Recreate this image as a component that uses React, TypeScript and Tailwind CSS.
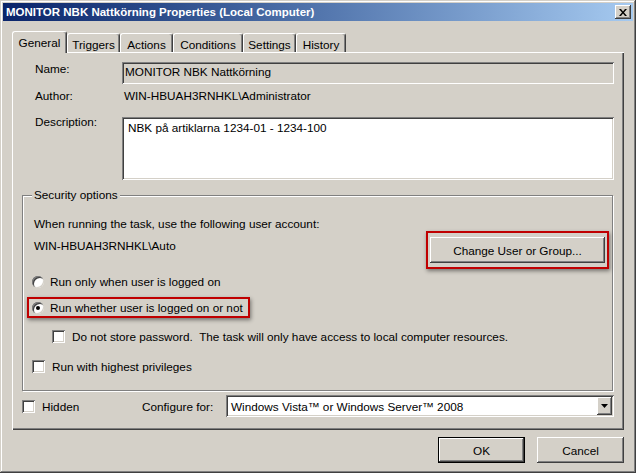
import React from "react";

const raised =
  "shadow-[inset_-1px_-1px_#404040,inset_1px_1px_#ffffff,inset_-2px_-2px_#808080,inset_2px_2px_#d4d0c8]";
const sunken =
  "shadow-[inset_1px_1px_#808080,inset_-1px_-1px_#ffffff,inset_2px_2px_#404040,inset_-2px_-2px_#d4d0c8]";

function Radio({ checked }: { checked?: boolean }) {
  return (
    <span className="w-[12px] h-[12px] rounded-full bg-white shadow-[inset_1px_1px_#808080,inset_-1px_-1px_#d4d0c8,inset_2px_2px_#404040] flex items-center justify-center shrink-0">
      {checked && <span className="w-[4px] h-[4px] rounded-full bg-black" />}
    </span>
  );
}

function Check() {
  return <span className={`w-[13px] h-[13px] bg-white shrink-0 ${sunken}`} />;
}

function Tab({ label, w, active }: { label: string; w: string; active?: boolean }) {
  return (
    <div
      className={`${w} ${
        active ? "h-[22px] -mb-[1px] z-10 pt-0" : "h-[19px] pt-[2px]"
      } relative bg-[#d4d0c8] flex items-center justify-center rounded-t-[3px] border-t border-l border-white border-r border-r-[#404040] shadow-[inset_-1px_0_#808080]`}
    >
      {label}
    </div>
  );
}

export default function App() {
  return (
    <div className="w-[636px] h-[473px] bg-[#d4d0c8] p-[3px] flex flex-col text-[11.75px] leading-[15px] text-black font-['Liberation_Sans',Arial,sans-serif] shadow-[inset_-1px_-1px_#404040,inset_1px_1px_#d4d0c8,inset_-2px_-2px_#808080,inset_2px_2px_#ffffff]">
      {/* title bar */}
      <div className="h-[18px] shrink-0 flex items-center justify-between pl-[3px] pr-[2px] bg-gradient-to-r from-[#0a246a] to-[#a6caf0]">
        <span className="text-white font-bold text-[11.5px]">
          MONITOR NBK Nattkörning Properties (Local Computer)
        </span>
        <div className={`w-[16px] h-[14px] bg-[#d4d0c8] flex items-center justify-center ${raised}`}>
          <svg width="8" height="7" viewBox="0 0 8 7">
            <path d="M0 0h2l2 2.5L6 0h2L5 3.5 8 7H6L4 4.5 2 7H0l3-3.5z" fill="#000" />
          </svg>
        </div>
      </div>

      <div className="flex-1 flex flex-col px-[9px] pt-[10px]">
        {/* tabs */}
        <div className="h-[21px] flex items-end relative z-10">
          <Tab label="General" w="w-[55px]" active />
          <Tab label="Triggers" w="w-[53px]" />
          <Tab label="Actions" w="w-[53px]" />
          <Tab label="Conditions" w="w-[70px]" />
          <Tab label="Settings" w="w-[53px]" />
          <Tab label="History" w="w-[50px]" />
        </div>

        {/* panel */}
        <div className="h-[378px] flex flex-col px-[10px] pt-[10px] shadow-[inset_1px_1px_#ffffff,inset_-1px_-1px_#404040,inset_-2px_-2px_#808080]">
          <div className="flex items-start">
            <div className="w-[100px] pl-[13px] -mt-[1px]">Name:</div>
            <div className={`w-[492px] h-[22px] pl-[3px] pt-[2px] bg-[#d4d0c8] ${sunken}`}>
              MONITOR NBK Nattkörning
            </div>
          </div>
          <div className="flex mt-[4px]">
            <div className="w-[100px] pl-[13px]">Author:</div>
            <div className="pl-[2px]">WIN-HBUAH3RNHKL\Administrator</div>
          </div>
          <div className="flex items-start mt-[14px]">
            <div className="w-[100px] pl-[13px] -mt-[3px]">Description:</div>
            <div className={`w-[492px] h-[63px] pl-[6px] pt-[3px] bg-white ${sunken}`}>
              NBK på artiklarna 1234-01 - 1234-100
            </div>
          </div>

          {/* security group */}
          <div className="relative mt-[15px] mr-[1px] h-[196px] border border-[#808080] shadow-[inset_1px_1px_#ffffff,1px_1px_#ffffff] pl-[11px] pr-[3px] pt-[20px] flex flex-col">
            <span className="absolute -top-[9px] left-[9px] px-[2px] bg-[#d4d0c8]">Security options</span>
            <div>When running the task, use the following user account:</div>
            <div className="flex justify-between items-start">
              <div className="mt-[7px]">WIN-HBUAH3RNHKL\Auto</div>
              <div className="border-2 border-[#c00000] px-[2px] py-[4px] shadow-[1px_2px_4px_rgba(0,0,0,0.45)]">
                <div className={`w-[175px] h-[26px] flex items-center justify-center bg-[#d4d0c8] ${raised}`}>
                  Change User or Group...
                </div>
              </div>
            </div>
            <div className="flex items-center gap-[6px] h-[21px] mt-[2px] -ml-[2px]">
              <Radio />
              <span>Run only when user is logged on</span>
            </div>
            <div className="mt-[5px] -ml-[7px] w-[223px] h-[21px] border-2 border-[#c00000] pl-[3px] flex items-center gap-[6px] shadow-[1px_2px_4px_rgba(0,0,0,0.45)]">
              <Radio checked />
              <span>Run whether user is logged on or not</span>
            </div>
            <div className="flex items-center gap-[7px] h-[15px] mt-[11px] ml-[18px]">
              <Check />
              <span>Do not store password.&nbsp; The task will only have access to local computer resources.</span>
            </div>
            <div className="flex items-center gap-[7px] h-[15px] mt-[15px] -ml-[2px]">
              <Check />
              <span>Run with highest privileges</span>
            </div>
          </div>

          {/* bottom row */}
          <div className="flex items-center h-[22px] mt-[4px]">
            <div className="w-[120px] flex items-center gap-[7px]">
              <Check />
              <span className="pt-[1px]">Hidden</span>
            </div>
            <span className="pt-[1px]">Configure for:</span>
            <div className={`ml-auto w-[388px] h-[22px] bg-white flex items-center justify-between pl-[5px] pr-[2px] ${sunken}`}>
              <span className="pt-[1px]">Windows Vista™ or Windows Server™ 2008</span>
              <div className={`w-[15px] h-[18px] bg-[#d4d0c8] flex items-center justify-center ${raised}`}>
                <svg width="7" height="4" viewBox="0 0 7 4">
                  <path d="M0 0h7L3.5 4z" fill="#000" />
                </svg>
              </div>
            </div>
          </div>
        </div>

        {/* buttons */}
        <div className="flex justify-end gap-[12px] mt-[7px]">
          <div className="w-[87px] h-[26px] border border-black">
            <div className={`w-full h-full flex items-center justify-center bg-[#d4d0c8] ${raised}`}>OK</div>
          </div>
          <div className={`w-[87px] h-[26px] flex items-center justify-center bg-[#d4d0c8] ${raised}`}>Cancel</div>
        </div>
      </div>
    </div>
  );
}
